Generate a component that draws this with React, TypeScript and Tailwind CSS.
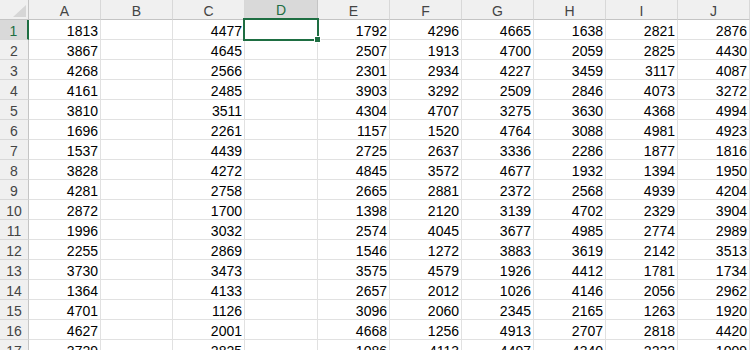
const cols = ['A', 'B', 'C', 'D', 'E', 'F', 'G', 'H', 'I', 'J'];

// B and D are empty columns
const rows: (number | null)[][] = [
  [1813, null, 4477, null, 1792, 4296, 4665, 1638, 2821, 2876],
  [3867, null, 4645, null, 2507, 1913, 4700, 2059, 2825, 4430],
  [4268, null, 2566, null, 2301, 2934, 4227, 3459, 3117, 4087],
  [4161, null, 2485, null, 3903, 3292, 2509, 2846, 4073, 3272],
  [3810, null, 3511, null, 4304, 4707, 3275, 3630, 4368, 4994],
  [1696, null, 2261, null, 1157, 1520, 4764, 3088, 4981, 4923],
  [1537, null, 4439, null, 2725, 2637, 3336, 2286, 1877, 1816],
  [3828, null, 4272, null, 4845, 3572, 4677, 1932, 1394, 1950],
  [4281, null, 2758, null, 2665, 2881, 2372, 2568, 4939, 4204],
  [2872, null, 1700, null, 1398, 2120, 3139, 4702, 2329, 3904],
  [1996, null, 3032, null, 2574, 4045, 3677, 4985, 2774, 2989],
  [2255, null, 2869, null, 1546, 1272, 3883, 3619, 2142, 3513],
  [3730, null, 3473, null, 3575, 4579, 1926, 4412, 1781, 1734],
  [1364, null, 4133, null, 2657, 2012, 1026, 4146, 2056, 2962],
  [4701, null, 1126, null, 3096, 2060, 2345, 2165, 1263, 1920],
  [4627, null, 2001, null, 4668, 1256, 4913, 2707, 2818, 4420],
  [3729, null, 2825, null, 1086, 4113, 4497, 4340, 2232, 1009],
];

export default function App() {
  return (
    <div
      className="relative w-[750px] h-[350px] overflow-hidden bg-white text-[14px] text-black"
      style={{ fontFamily: '"Liberation Sans", Arial, sans-serif' }}
    >
      <div className="grid grid-cols-[29px_72px_72px_72px_73px_72px_72px_72px_72px_72px_72px] auto-rows-[20px]">
        {/* corner */}
        <div className="relative bg-[#f0f0f0] border-r border-b border-[#c4c4c4]">
          <svg className="absolute left-[13px] top-[5px]" width="13" height="12" viewBox="0 0 13 12">
            <polygon points="13,0 13,12 0,12" fill="#d6d6d6" />
          </svg>
        </div>

        {/* column headers */}
        {cols.map((c) => (
          <div
            key={c}
            className={
              c === 'D'
                ? 'flex items-end justify-center leading-[16px] bg-[#d9d9d9] text-[#1e6e42] border-r border-[#c4c4c4] border-b-2 border-b-[#1e6e42]'
                : 'flex items-end justify-center leading-[16px] bg-[#f0f0f0] text-[#444444] border-r border-r-[#d8d8d8] border-b border-b-[#c4c4c4]'
            }
          >
            {c}
          </div>
        ))}

        {rows.map((r, i) => (
          <Row key={i} n={i + 1} values={r} />
        ))}
      </div>

      {/* active cell D1 */}
      <div className="absolute left-[243px] top-[18px] w-[76px] h-[23px] border-2 border-[#1e6e42]" />
      <div className="absolute left-[314px] top-[36px] w-[7px] h-[7px] bg-[#1e6e42] border border-white" />
    </div>
  );
}

function Row({ n, values }: { n: number; values: (number | null)[] }) {
  const active = n === 1;
  return (
    <>
      <div
        className={
          active
            ? 'flex items-end justify-center leading-[16px] bg-[#d9d9d9] text-[#1e6e42] border-b border-b-[#d8d8d8] border-r-2 border-r-[#1e6e42]'
            : 'flex items-end justify-center leading-[16px] bg-[#f0f0f0] text-[#444444] border-b border-b-[#d8d8d8] border-r border-r-[#c4c4c4]'
        }
      >
        {n}
      </div>
      {values.map((v, j) => (
        <div
          key={j}
          className="flex items-end justify-end leading-[16px] pr-[2px] border-r border-b border-[#e1e1e1]"
        >
          {v ?? ''}
        </div>
      ))}
    </>
  );
}
